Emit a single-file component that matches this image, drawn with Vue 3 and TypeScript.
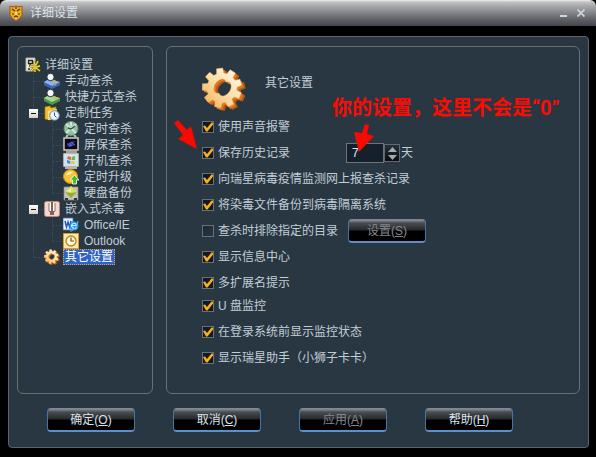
<script setup lang="ts">
import { ref } from 'vue'

type IconName =
  | 'root' | 'manual' | 'quick' | 'task' | 'timer' | 'screen' | 'boot'
  | 'upgrade' | 'disk' | 'embed' | 'office' | 'outlook' | 'gear'

interface TreeNode {
  label: string
  icon: IconName
  children?: TreeNode[]
}

interface Option {
  id: string
  label: string
  checked: boolean
  extra?: 'days' | 'dirs'
}

const tree: TreeNode[] = [
  { label: '手动查杀', icon: 'manual' },
  { label: '快捷方式查杀', icon: 'quick' },
  {
    label: '定制任务',
    icon: 'task',
    children: [
      { label: '定时查杀', icon: 'timer' },
      { label: '屏保查杀', icon: 'screen' },
      { label: '开机查杀', icon: 'boot' },
      { label: '定时升级', icon: 'upgrade' },
      { label: '硬盘备份', icon: 'disk' },
    ],
  },
  {
    label: '嵌入式杀毒',
    icon: 'embed',
    children: [
      { label: 'Office/IE', icon: 'office' },
      { label: 'Outlook', icon: 'outlook' },
    ],
  },
  { label: '其它设置', icon: 'gear' },
]

const selected = ref('其它设置')
const collapsed = ref<string[]>([])

function toggle(label: string) {
  collapsed.value = collapsed.value.includes(label)
    ? collapsed.value.filter((l) => l !== label)
    : [...collapsed.value, label]
}

const groups = ref<Option[][]>([
  [
    { id: 'sound', label: '使用声音报警', checked: true },
    { id: 'history', label: '保存历史记录', checked: true, extra: 'days' },
    { id: 'report', label: '向瑞星病毒疫情监测网上报查杀记录', checked: true },
    { id: 'backup', label: '将染毒文件备份到病毒隔离系统', checked: true },
    { id: 'exclude', label: '查杀时排除指定的目录', checked: false, extra: 'dirs' },
    { id: 'info', label: '显示信息中心', checked: true },
    { id: 'ext', label: '多扩展名提示', checked: true },
  ],
  [
    { id: 'usb', label: 'U 盘监控', checked: true },
    { id: 'login', label: '在登录系统前显示监控状态', checked: true },
    { id: 'assistant', label: '显示瑞星助手（小狮子卡卡）', checked: true },
  ],
])

const days = ref(7)

const actions = [
  { label: '确定', key: 'O', disabled: false },
  { label: '取消', key: 'C', disabled: false },
  { label: '应用', key: 'A', disabled: true },
  { label: '帮助', key: 'H', disabled: false },
]

// Outline of a nine-toothed wheel with a tilted oval hole.
function wheel(cx: number, cy: number, outer: number, inner: number): string {
  const teeth = 9
  const steps: [number, number][] = [[-14, inner], [-9, outer], [9, outer], [14, inner]]
  const points: string[] = []
  for (let i = 0; i < teeth; i++) {
    for (const [offset, r] of steps) {
      const a = ((i * 360) / teeth - 97 + offset) * (Math.PI / 180)
      points.push(`${(cx + r * Math.cos(a)).toFixed(1)} ${(cy + r * Math.sin(a)).toFixed(1)}`)
    }
  }
  return `M${points.join('L')}z M${cx + 4} ${cy - 6}a5 8 35 1 0 -7 11a5 8 35 1 0 7 -11z`
}

const wheelPath = wheel(20, 21, 20, 15)
</script>

<template>
  <div class="window">
    <svg class="defs" width="0" height="0" aria-hidden="true">
      <defs>
        <linearGradient id="pale" x1="1" y1="0" x2="0" y2="1">
          <stop offset="0" stop-color="#fffaf0" />
          <stop offset="0.5" stop-color="#fddfa9" />
          <stop offset="1" stop-color="#f4ab4c" />
        </linearGradient>
        <symbol id="i-root" viewBox="0 0 16 16">
          <path d="M1 1h9v13H1z" fill="#eceae2" stroke="#b3b1a6" />
          <path d="M3.500 3.500h4v3h-4zM5 7v3M3 12h2" fill="none" stroke="#222" stroke-width="1.300" />
          <path d="M9 4l1 4M13 4l-2 4M15 9l-4 1M5 9l4 1M15 14l-4-3M6 14l3-3M10 8v7" stroke="#5d5208" stroke-width="2.400" />
          <path d="M9 4l1 4M13 4l-2 4M15 9l-4 1M5 9l4 1M15 14l-4-3M6 14l3-3M10 8v7" stroke="#ecdc48" stroke-width="1.300" />
          <circle cx="10" cy="10" r="2" fill="#d8c430" />
        </symbol>
        <symbol id="i-manual" viewBox="0 0 16 16">
          <path d="M0 9l5-3 11 3v3l-8 4-8-4z" fill="#3f63bc" />
          <path d="M0 9l5-3 11 3-8 4z" fill="#8fb0ef" />
          <path d="M9 11l4-1-2 3z" fill="#5cc84e" />
          <path d="M9 7l4 3" stroke="#d8b070" stroke-width="2" />
          <circle cx="6.500" cy="4" r="3.700" fill="#f8fcff" stroke="#1c252c" />
        </symbol>
        <symbol id="i-quick" viewBox="0 0 16 16">
          <path d="M0 9l5-3 11 3v3l-8 4-8-4z" fill="#4f9a4a" />
          <path d="M0 9l5-3 11 3-8 4z" fill="#a8d890" />
          <path d="M9 7l4 3" stroke="#d8b070" stroke-width="2" />
          <circle cx="6.500" cy="4" r="3.700" fill="#f8fcff" stroke="#1c252c" />
        </symbol>
        <symbol id="i-task" viewBox="0 0 16 16">
          <path d="M1 2l5-1 1 2 5-1v4l-6 9-5-1z" fill="#f2bd2c" stroke="#b97c0c" stroke-width=".7" />
          <path d="M4 6l9-2-2 10-7 1z" fill="#ffe17a" />
          <circle cx="10.500" cy="10.500" r="4.800" fill="#eaf5ff" stroke="#5b86b4" />
          <path d="M10.500 7.500v3l2 2" fill="none" stroke="#2b557f" />
        </symbol>
        <symbol id="i-timer" viewBox="0 0 16 16">
          <path d="M5 14l-2 2M11 14l2 2" stroke="#b9c9bd" stroke-width="2" />
          <circle cx="8" cy="7.500" r="7" fill="#93bfa4" stroke="#6a9079" />
          <path d="M3 3l10 9M13 3L3 12M8 1v4" stroke="#cfe5d6" stroke-width="2" />
          <path d="M8 8l4-3M8 8L5 7" stroke="#28573c" stroke-width="1.400" />
        </symbol>
        <symbol id="i-screen" viewBox="0 0 16 16">
          <path d="M1 1h14v12H1z" fill="#090918" stroke="#d6d3cc" stroke-width="1.400" />
          <path d="M4 9l3-4 5-1-2 3 2 1-5 2z" fill="#3838a8" />
          <path d="M4 7h4M8 5l4 3M6 9l3-1" stroke="#6464d4" />
          <path d="M3 15h11" stroke="#aaa28c" stroke-width="2" />
        </symbol>
        <symbol id="i-boot" viewBox="0 0 16 16">
          <path d="M1 1h14v12H1z" fill="#c9e6fb" stroke="#e2dfd2" stroke-width="1.400" />
          <path d="M5 3l3 1v3L4 6z" fill="#e8633c" />
          <path d="M9 4l3-1v4L8.500 7z" fill="#70b83e" />
          <path d="M4 7l3.500 1-.5 3-3-1z" fill="#4684de" />
          <path d="M8.500 8h3v3H8z" fill="#f4c52c" />
          <path d="M2 15h12" stroke="#b8b5a6" stroke-width="2" />
        </symbol>
        <symbol id="i-upgrade" viewBox="0 0 16 16">
          <circle cx="7.500" cy="7.500" r="7" fill="#f9c23a" stroke="#d68b12" />
          <path d="M3 6c1-3 4-4 7-3-2 1-3 4-7 3z" fill="#fff0ae" />
          <path d="M11.500 6L16 11h-2.500v4h-4v-4H7z" fill="#46bb2e" stroke="#eaffdf" stroke-width=".9" />
        </symbol>
        <symbol id="i-disk" viewBox="0 0 16 16">
          <path d="M1 2h14v13H1z" fill="#c4c4c4" stroke="#8b8b8b" stroke-width=".7" />
          <path d="M8 1l6 6-6 6-6-6z" fill="#99ab28" />
          <path d="M8 1l6 6-6 1-6-1z" fill="#d6e264" />
          <path d="M8 3L4 6l4 1z" fill="#f0f5a5" />
          <path d="M2 14h3M11 14h3" stroke="#333" stroke-width="2" />
        </symbol>
        <symbol id="i-embed" viewBox="0 0 16 16">
          <rect x=".5" y=".5" width="15" height="15" rx="2" fill="#efd9d0" stroke="#b98776" />
          <path d="M5 2v8l3 3 3-3V2" fill="#fff" stroke="#94685c" />
          <path d="M8 1v9" stroke="#5c3a32" stroke-width="1.600" />
          <path d="M6 10h4v4H6z" fill="#8f5e52" />
        </symbol>
        <symbol id="i-office" viewBox="0 0 16 16">
          <path d="M0 1h10v12H0z" fill="#e8f1ff" stroke="#4271b8" stroke-width=".8" />
          <path d="M2 4l1.500 6L5 5l1.500 5L8 4" fill="none" stroke="#2a57c0" stroke-width="1.500" />
          <circle cx="11" cy="9" r="4.500" fill="#2f98e6" />
          <path d="M14 8.500H8.500c1-3 4.500-3 5 0M8.500 9c1 3 4 3 5 1.500" fill="none" stroke="#c5ecff" stroke-width="1.200" />
          <path d="M7 14c2 1 8-5 8-10" fill="none" stroke="#6fc1f4" />
        </symbol>
        <symbol id="i-outlook" viewBox="0 0 16 16">
          <path d="M.5.500h15v15H.5z" fill="#ffe9a8" stroke="#dc9a26" />
          <circle cx="8" cy="8" r="5" fill="#fff7d8" stroke="#bd852b" stroke-width="1.400" />
          <path d="M8 4.500V8h3" fill="none" stroke="#7d5312" stroke-width="1.200" />
        </symbol>
        <symbol id="i-gear" viewBox="0 0 44 44">
          <g fill-rule="evenodd" stroke-linejoin="round">
            <path transform="translate(4 3)" fill="#b9550f" :d="wheelPath" />
            <path transform="translate(2 2)" fill="#d87722" :d="wheelPath" />
            <path fill="url(#pale)" stroke="#f0b057" stroke-width=".5" :d="wheelPath" />
          </g>
        </symbol>
      </defs>
    </svg>

    <header class="titlebar">
      <svg class="logo" viewBox="0 0 14 16" aria-hidden="true">
        <path d="M1 1l3 1 3-1 3 1 3-1v9l-2 3-4 3-4-3-2-3z" fill="#f0ac22" stroke="#9a5a08" />
        <path d="M3 4l3 2M11 4L8 6M3 9h2M11 9H9M5 12l2-1 2 1M7 2v2" stroke="#5a2e04" stroke-width="1.200" fill="none" />
        <path d="M6 7h2v3H6z" fill="#ffe28a" />
      </svg>
      <h1>详细设置</h1>
      <button class="caption" type="button" aria-label="最小化">
        <svg viewBox="0 0 8 8"><path d="M0 7h7" stroke="#ccd4e0" stroke-width="2" /></svg>
      </button>
      <button class="caption" type="button" aria-label="关闭">
        <svg viewBox="0 0 8 8"><path d="M.5.500l7 7M7.500.500l-7 7" stroke="#ccd4e0" stroke-width="1.800" /></svg>
      </button>
    </header>

    <main class="body">
      <div class="columns">
        <nav class="pane tree">
          <div class="node root">
            <svg class="icon"><use href="#i-root" /></svg>
            <span class="name">详细设置</span>
          </div>
          <ul class="branch">
            <li v-for="n in tree" :key="n.label">
              <div class="node">
                <button
                  v-if="n.children"
                  class="expander"
                  type="button"
                  :aria-label="n.label"
                  :aria-expanded="!collapsed.includes(n.label)"
                  @click="toggle(n.label)"
                >
                  <svg viewBox="0 0 9 9">
                    <path d="M2 4.500h5" stroke="#111" />
                    <path v-if="collapsed.includes(n.label)" d="M4.500 2v5" stroke="#111" />
                  </svg>
                </button>
                <svg class="icon"><use :href="'#i-' + n.icon" /></svg>
                <button class="name" :class="{ on: selected === n.label }" type="button" @click="selected = n.label">{{ n.label }}</button>
              </div>
              <ul v-if="n.children && !collapsed.includes(n.label)" class="branch">
                <li v-for="c in n.children" :key="c.label">
                  <div class="node">
                    <svg class="icon"><use :href="'#i-' + c.icon" /></svg>
                    <button class="name" :class="{ on: selected === c.label }" type="button" @click="selected = c.label">{{ c.label }}</button>
                  </div>
                </li>
              </ul>
            </li>
          </ul>
        </nav>

        <section class="pane detail">
          <div class="heading">
            <svg class="big"><use href="#i-gear" /></svg>
            <h2>其它设置</h2>
          </div>
          <div class="groups">
            <div v-for="(g, i) in groups" :key="i" class="group">
              <div v-for="o in g" :key="o.id" class="row">
                <label class="option" :class="{ wide: o.extra }">
                  <input v-model="o.checked" type="checkbox" />
                  <span>{{ o.label }}</span>
                </label>
                <div v-if="o.extra === 'days'" class="days">
                  <input id="days" v-model="days" type="text" />
                  <div class="spin">
                    <button type="button" aria-label="增加" @click="days++"><svg viewBox="0 0 9 5"><path d="M0 5l4.500-5L9 5z" fill="#a3abb0" /></svg></button>
                    <button type="button" aria-label="减少" @click="days--"><svg viewBox="0 0 9 5"><path d="M0 0l4.500 5L9 0z" fill="#a3abb0" /></svg></button>
                  </div>
                  <label for="days">天</label>
                </div>
                <button v-if="o.extra === 'dirs'" class="btn small" type="button" :disabled="!o.checked">设置(<u>S</u>)</button>
              </div>
            </div>
          </div>
          <p class="note">你的设置，这里不会是“0”</p>
          <svg class="arrow first" viewBox="0 0 24 29" aria-hidden="true">
            <path d="M0 3L4 0l9 10 4-4 6 23L4 19l5-4z" fill="#f80a02" />
          </svg>
          <svg class="arrow second" viewBox="0 0 21 29" aria-hidden="true">
            <path d="M11 0l4 1-2 9 7 2L5 28 0 8l8 1z" fill="#f80a02" />
          </svg>
        </section>
      </div>

      <footer class="actions">
        <button v-for="a in actions" :key="a.key" class="btn" type="button" :disabled="a.disabled">{{ a.label }}(<u>{{ a.key }}</u>)</button>
      </footer>
    </main>
  </div>
</template>

<style>
body {
  background: #000;
}
</style>

<style scoped>
.window {
  display: flex;
  flex-direction: column;
  min-height: 100vh;
  box-sizing: border-box;
  padding-bottom: 9px;
  background: #000;
  color: #c3cdd8;
  font: 12px/16px "Liberation Sans", "Noto Sans CJK SC", sans-serif;
}
.window *,
.window *::before {
  box-sizing: border-box;
}
.defs {
  position: absolute;
}
h1,
h2,
p,
ul {
  margin: 0;
  padding: 0;
  font-size: 12px;
  font-weight: 400;
  list-style: none;
}
button {
  padding: 0;
  border: 0;
  background: none;
  color: inherit;
  font: inherit;
}
.titlebar {
  display: flex;
  align-items: center;
  gap: 7px;
  height: 26px;
  padding: 0 10px 0 9px;
  border-radius: 6px 6px 0 0;
  background: linear-gradient(#f0f0f0 0, #c2c2c4 2px, #a2a3a6 7px, #7d7f83 14px, #5b5d63 20px, #43464d 26px);
  color: #dce4ee;
}
.titlebar h1 {
  flex: 1;
}
.logo {
  width: 14px;
  height: 16px;
}
.caption {
  width: 10px;
  height: 10px;
  display: flex;
}
.caption svg {
  width: 8px;
  height: 8px;
  margin: auto;
}
.body {
  flex: 1;
  display: flex;
  flex-direction: column;
  margin: 10px 7px 0 8px;
  padding: 9px 8px 15px;
  border: 1px solid #5c646a;
  border-radius: 4px;
  background: #283741;
}
.columns {
  flex: 1;
  display: flex;
  gap: 13px;
}
.pane {
  border: 1px solid #6b6f70;
  border-radius: 6px;
}
.tree {
  width: 136px;
  padding: 10px 0 0 7px;
}
.node {
  position: relative;
  display: flex;
  align-items: center;
  gap: 3px;
  height: 16px;
}
.icon {
  flex: none;
  width: 16px;
  height: 16px;
}
.name {
  padding: 0 1px;
  white-space: nowrap;
  border: 1px solid transparent;
  line-height: 14px;
  cursor: default;
}
.node.root {
  gap: 2px;
}
.name.on {
  border: 1px dotted #d9a24a;
  background: #2f62c4;
  color: #fff;
}
.branch {
  padding-left: 19px;
}
.branch li {
  position: relative;
}
.branch li::before {
  content: "";
  position: absolute;
  top: 0;
  bottom: 0;
  left: -11px;
  border-left: 1px dotted #3d4d58;
}
.branch li:last-child::before {
  bottom: auto;
  height: 8px;
}
.branch .node::before {
  content: "";
  position: absolute;
  top: 8px;
  left: -10px;
  width: 10px;
  border-top: 1px dotted #3d4d58;
}
.expander {
  position: absolute;
  top: 4px;
  left: -15px;
  width: 9px;
  height: 9px;
  background: linear-gradient(#fff, #d4d0c4);
}
.expander svg {
  display: block;
  width: 9px;
  height: 9px;
}
.detail {
  position: relative;
  flex: 1;
  padding: 20px 20px 0 35px;
}
.heading {
  display: flex;
  gap: 19px;
  height: 50px;
}
.heading .big {
  width: 44px;
  height: 44px;
}
.heading h2 {
  padding-top: 8px;
}
.groups {
  display: flex;
  flex-direction: column;
  gap: 3px;
}
.group {
  display: flex;
  flex-direction: column;
  gap: 6px;
}
.row {
  display: flex;
  align-items: center;
  height: 20px;
}
.option {
  display: flex;
  align-items: center;
  gap: 4px;
  white-space: nowrap;
}
.option.wide {
  width: 144px;
}
.option input {
  appearance: none;
  display: grid;
  width: 12px;
  height: 12px;
  margin: 0;
  border: 1px solid #6d7071;
  background: linear-gradient(135deg, #1b2a35, #263844);
}
.option input:checked {
  background: #101b25;
}
.option input:checked::before {
  content: "";
  width: 10px;
  height: 10px;
  background: #fcae19;
  clip-path: polygon(0 40%, 20% 35%, 40% 60%, 85% 5%, 100% 5%, 100% 25%, 45% 95%, 30% 95%);
}
.days {
  display: flex;
  align-items: center;
}
.days > input {
  width: 38px;
  height: 20px;
  padding: 0 5px;
  border: 1px solid #6e7376;
  border-radius: 0;
  background: #14212c;
  color: #e0e6ec;
  font: inherit;
}
.spin {
  display: flex;
  flex-direction: column;
  width: 16px;
  height: 18px;
  border: 1px solid #62686c;
  background: linear-gradient(#26323b, #080c10);
}
.spin button {
  flex: 1;
  display: flex;
}
.spin svg {
  width: 9px;
  height: 5px;
  margin: auto;
}
.days label {
  padding-left: 1px;
}
.btn {
  width: 88px;
  height: 24px;
  border: 1px solid #4773a5;
  border-top-color: #7c8a98;
  border-bottom: 2px solid #5b90cc;
  border-radius: 4px;
  background: linear-gradient(#8a8e92 0, #4a4d51 3px, #26282b 10px, #000 11px, #000 100%);
  color: #dbe2ec;
  text-align: center;
  line-height: 20px;
}
.btn:disabled {
  color: #85888c;
}
.btn.small {
  width: 78px;
  margin-left: 2px;
}
.actions {
  display: flex;
  gap: 38px;
  padding: 14px 30px 0;
}
.note {
  position: absolute;
  top: 47px;
  left: 165px;
  color: #fa0c04;
  font: 700 20px/28px Roboto, "Noto Sans CJK SC", sans-serif;
  white-space: nowrap;
}
.arrow {
  position: absolute;
}
.first {
  top: 73px;
  left: 7px;
  width: 24px;
  height: 29px;
}
.second {
  top: 77px;
  left: 187px;
  width: 21px;
  height: 29px;
}
</style>
